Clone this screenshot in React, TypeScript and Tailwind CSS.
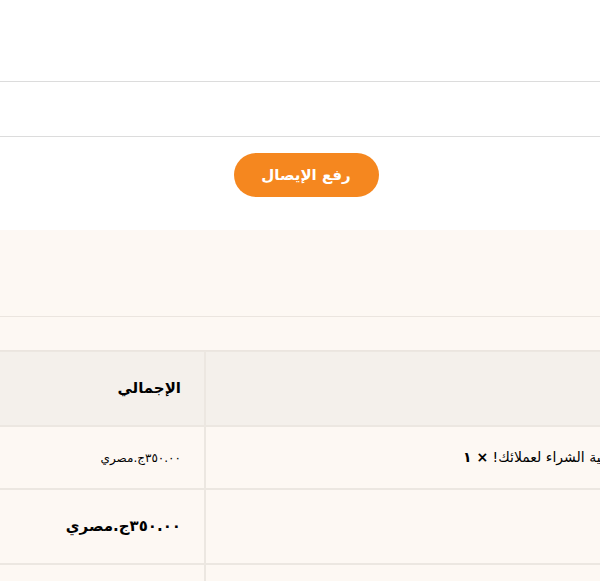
const font = 'font-["DejaVu_Sans",sans-serif]'

export default function App() {
  return (
    <div dir="ltr" className={`w-full overflow-hidden bg-white ${font}`}>
      {/* upload form */}
      <div className="h-[81px]" />
      <div className="h-[55px] border-t border-[#dcdcdc]" />
      <div className="flex h-[94px] justify-center border-t border-[#dcdcdc] pl-3 pt-4">
        <button
          dir="rtl"
          className="h-[44px] w-[145px] rounded-full bg-[#f5871f] text-[15px] font-bold text-white"
        >
          رفع الإيصال
        </button>
      </div>

      {/* order details */}
      <div className="bg-[#fdf8f3]">
        <div className="h-[86px]" />
        <div className="h-[34px] border-t border-[#ebe5df]" />
        <div className="grid w-[900px] grid-cols-[204px_694px] gap-[2px] border-t border-[#ebe5df] bg-[#ece7e1] pt-[1px]">
          <div className="flex h-[73px] items-center justify-end bg-[#f4f0eb] pr-[23px]">
            <span dir="rtl" className="text-[15px] font-bold text-black">
              الإجمالي
            </span>
          </div>
          <div className="bg-[#f4f0eb]" />

          <div className="flex h-[61px] items-center justify-end bg-[#fdf8f3] pr-[23px]">
            <span dir="rtl" className="text-[12px] text-black">
              ٣٥٠.٠٠ج.مصري
            </span>
          </div>
          <div className="flex items-center bg-[#fdf8f3] pl-[257px]">
            <span dir="rtl" className="whitespace-nowrap text-[14px] text-black">
              منتج تجريبي لتسهيل عملية الشراء لعملائك!{' '}
              <strong className="font-bold">× ١</strong>
            </span>
          </div>

          <div className="flex h-[73px] items-center justify-end bg-[#fdf8f3] pr-[23px]">
            <span dir="rtl" className="text-[15px] font-bold text-black">
              ٣٥٠.٠٠ج.مصري
            </span>
          </div>
          <div className="bg-[#fdf8f3]" />

          <div className="h-[40px] bg-[#fdf8f3]" />
          <div className="bg-[#fdf8f3]" />
        </div>
      </div>
    </div>
  )
}
